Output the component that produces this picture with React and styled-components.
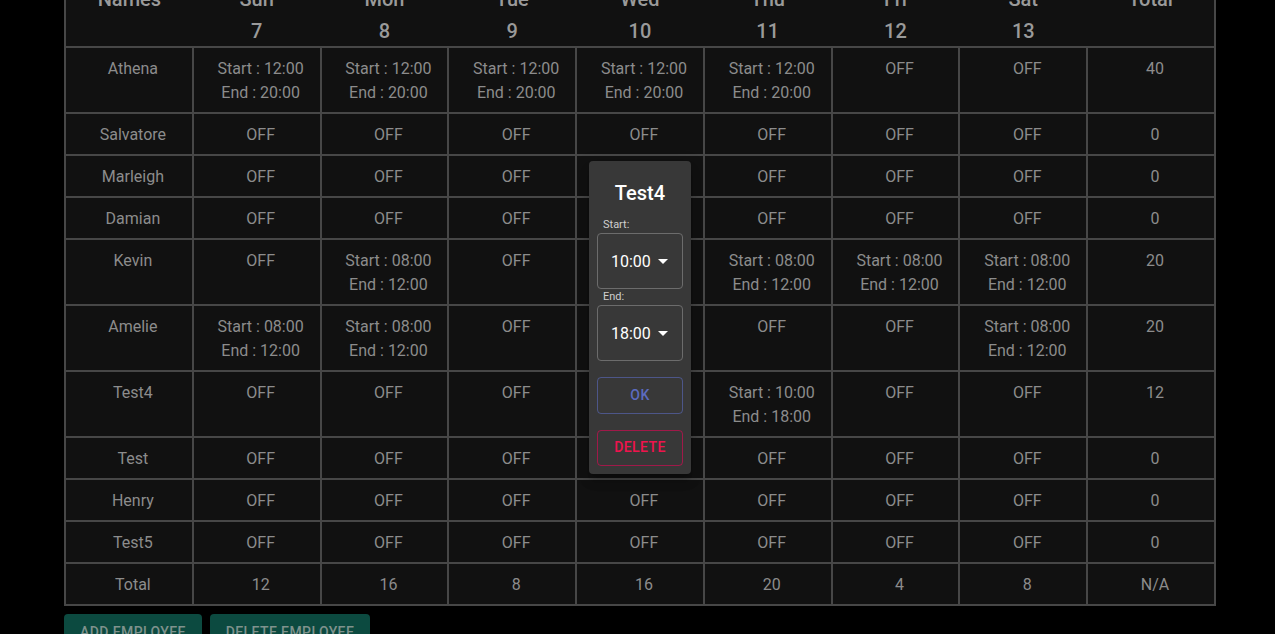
import React from "react";
import styled, { createGlobalStyle } from "styled-components";

const GlobalStyle = createGlobalStyle`
  html, body {
    margin: 0;
    padding: 0;
    background: #000;
    font-family: Roboto, "Liberation Sans", sans-serif;
  }
`;

const days = [
  { name: "Sun", num: 7 },
  { name: "Mon", num: 8 },
  { name: "Tue", num: 9 },
  { name: "Wed", num: 10 },
  { name: "Thu", num: 11 },
  { name: "Fri", num: 12 },
  { name: "Sat", num: 13 },
];

const s = (a, b) => ({ start: a, end: b });

const employees = [
  { name: "Athena", shifts: [s("12:00", "20:00"), s("12:00", "20:00"), s("12:00", "20:00"), s("12:00", "20:00"), s("12:00", "20:00"), null, null], total: 40 },
  { name: "Salvatore", shifts: [null, null, null, null, null, null, null], total: 0 },
  { name: "Marleigh", shifts: [null, null, null, null, null, null, null], total: 0 },
  { name: "Damian", shifts: [null, null, null, null, null, null, null], total: 0 },
  { name: "Kevin", shifts: [null, s("08:00", "12:00"), null, s("08:00", "12:00"), s("08:00", "12:00"), s("08:00", "12:00"), s("08:00", "12:00")], total: 20 },
  { name: "Amelie", shifts: [s("08:00", "12:00"), s("08:00", "12:00"), null, s("08:00", "12:00"), null, null, s("08:00", "12:00")], total: 20 },
  { name: "Test4", shifts: [null, null, null, null, s("10:00", "18:00"), null, null], total: 12 },
  { name: "Test", shifts: [null, null, null, null, null, null, null], total: 0 },
  { name: "Henry", shifts: [null, null, null, null, null, null, null], total: 0 },
  { name: "Test5", shifts: [null, null, null, null, null, null, null], total: 0 },
];

const dayTotals = [12, 16, 8, 16, 20, 4, 8];

const Page = styled.div`
  position: relative;
  height: 634px;
  overflow: hidden;
`;

const Content = styled.div`
  margin-top: -30px;
  padding-left: 64px;
`;

const Schedule = styled.table`
  width: 1152px;
  table-layout: fixed;
  border-collapse: collapse;
  background: #111111;
  border: 2px solid #474747;
`;

const HeadCell = styled.th`
  vertical-align: top;
  padding: 10px 0 0;
  font-weight: 500;
  font-size: 20px;
  color: #9a9a9a;
  text-align: center;
  border-bottom: 2px solid #474747;
`;

const DayName = styled.div`
  line-height: 34px;
`;

const DayNum = styled.div`
  line-height: 30px;
`;

const Cell = styled.td`
  vertical-align: top;
  text-align: center;
  padding: 9px 0 7px 8px;
  font-size: 16px;
  line-height: 24px;
  color: #8c8c8c;
  border: 2px solid #474747;
`;

const Actions = styled.div`
  display: flex;
  gap: 8px;
  margin-top: 8px;
`;

const ActionButton = styled.button`
  width: ${(p) => p.$w}px;
  height: 36px;
  background: #0c4a40;
  border: none;
  border-radius: 4px;
  color: #7f928d;
  font-family: Roboto, "Liberation Sans", sans-serif;
  font-size: 14px;
  font-weight: 500;
  letter-spacing: 0.4px;
  text-transform: uppercase;
  padding: 0;
`;

const Popup = styled.div`
  position: absolute;
  left: 589px;
  top: 161px;
  width: 102px;
  height: 313px;
  box-sizing: border-box;
  padding: 16px 8px 0;
  background: #383838;
  border-radius: 4px;
  box-shadow: 0 5px 5px -3px rgba(0, 0, 0, 0.2), 0 8px 10px 1px rgba(0, 0, 0, 0.14),
    0 3px 14px 2px rgba(0, 0, 0, 0.12);
  display: flex;
  flex-direction: column;
`;

const PopupTitle = styled.div`
  text-align: center;
  color: #fff;
  font-size: 20px;
  font-weight: 500;
  line-height: 32px;
  margin-bottom: 8px;
`;

const FieldLabel = styled.div`
  color: #cfcfcf;
  font-size: 11px;
  line-height: 16px;
  padding-left: 6px;
`;

const SelectBox = styled.div`
  height: 56px;
  box-sizing: border-box;
  border: 1px solid #6c6c6c;
  border-radius: 4px;
  display: flex;
  align-items: center;
  padding-left: 13px;
  color: #fff;
  font-size: 16px;
  margin-bottom: ${(p) => p.$mb}px;
`;

const Caret = styled.svg`
  width: 24px;
  height: 24px;
  fill: #fff;
`;

const OutlineButton = styled.button`
  height: ${(p) => p.$h}px;
  box-sizing: border-box;
  background: transparent;
  border: 1px solid ${(p) => p.$border};
  border-radius: 4px;
  color: ${(p) => p.$color};
  font-family: Roboto, "Liberation Sans", sans-serif;
  font-size: 14px;
  font-weight: 500;
  letter-spacing: 0.4px;
  text-transform: uppercase;
  padding: 0 0 2px;
  margin-bottom: ${(p) => p.$mb}px;
`;

const ShiftText = ({ shift }) =>
  shift ? (
    <>
      Start : {shift.start}
      <br />
      End : {shift.end}
    </>
  ) : (
    "OFF"
  );

const TimeSelect = ({ value, mb }) => (
  <SelectBox $mb={mb}>
    {value}
    <Caret viewBox="0 0 24 24">
      <path d="M7 10l5 5 5-5z" />
    </Caret>
  </SelectBox>
);

export default function App() {
  return (
    <Page>
      <GlobalStyle />
      <Content>
        <Schedule>
          <thead>
            <tr>
              <HeadCell>
                <DayName>Names</DayName>
              </HeadCell>
              {days.map((d) => (
                <HeadCell key={d.name}>
                  <DayName>{d.name}</DayName>
                  <DayNum>{d.num}</DayNum>
                </HeadCell>
              ))}
              <HeadCell>
                <DayName>Total</DayName>
              </HeadCell>
            </tr>
          </thead>
          <tbody>
            {employees.map((e) => (
              <tr key={e.name}>
                <Cell>{e.name}</Cell>
                {e.shifts.map((sh, i) => (
                  <Cell key={i}>
                    <ShiftText shift={sh} />
                  </Cell>
                ))}
                <Cell>{e.total}</Cell>
              </tr>
            ))}
            <tr>
              <Cell>Total</Cell>
              {dayTotals.map((t, i) => (
                <Cell key={i}>{t}</Cell>
              ))}
              <Cell>N/A</Cell>
            </tr>
          </tbody>
        </Schedule>
        <Actions>
          <ActionButton $w={138}>Add Employee</ActionButton>
          <ActionButton $w={160}>Delete Employee</ActionButton>
        </Actions>
      </Content>
      <Popup>
        <PopupTitle>Test4</PopupTitle>
        <FieldLabel>Start:</FieldLabel>
        <TimeSelect value="10:00" mb={0} />
        <FieldLabel>End:</FieldLabel>
        <TimeSelect value="18:00" mb={16} />
        <OutlineButton $h={37} $mb={16} $border="rgba(92, 107, 192, 0.6)" $color="#5c6bc0">
          OK
        </OutlineButton>
        <OutlineButton $h={36} $mb={0} $border="rgba(245, 0, 87, 0.55)" $color="#f0134d">
          Delete
        </OutlineButton>
      </Popup>
    </Page>
  );
}
